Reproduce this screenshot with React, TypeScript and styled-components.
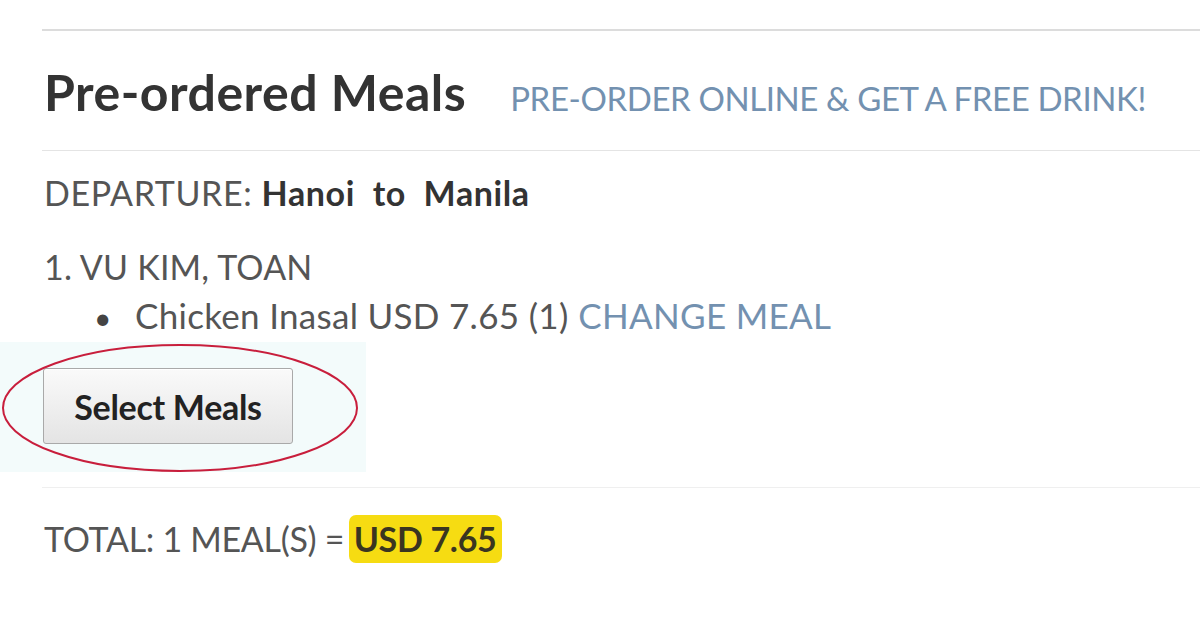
import React from 'react';
import styled, { createGlobalStyle } from 'styled-components';

const GlobalStyle = createGlobalStyle`
  html, body {
    margin: 0;
    padding: 0;
    background: #fff;
  }
  body {
    font-family: "Lato", "Liberation Sans", sans-serif;
    color: #555;
  }
`;

const Page = styled.div`
  width: 1200px;
  height: 630px;
  overflow: hidden;
  padding-top: 29px;
  box-sizing: border-box;
`;

const Section = styled.section`
  margin-left: 42px;
  border-top: 2px solid #dcdcdc;
`;

const HeadRow = styled.div`
  display: flex;
  align-items: baseline;
  gap: 44px;
  padding: 34px 0 30px 2px;
  border-bottom: 1px solid #e4e4e4;
`;

const Title = styled.h2`
  margin: 0;
  font-size: 50px;
  line-height: 55px;
  font-weight: 700;
  color: #333;
  letter-spacing: 0.5px;
`;

const Promo = styled.a`
  font-size: 33px;
  color: #7391b0;
  letter-spacing: -0.4px;
  text-decoration: none;
`;

const Body = styled.div`
  padding: 19px 0 0 2px;
`;

const Line = styled.p<{ $gap?: number }>`
  margin: 0 0 ${p => p.$gap ?? 0}px;
  font-size: 34px;
  line-height: 46px;
  color: #555;
  letter-spacing: 0.2px;
`;

const Departure = styled(Line)`
  letter-spacing: 0.6px;
`;

const Strong = styled.b`
  font-weight: 700;
  color: #333;
`;

const MealList = styled.ul`
  margin: 0;
  padding-left: 50px;
  list-style: none;
  font-size: 35px;
  line-height: 50px;
  letter-spacing: 0.3px;
`;

const MealItem = styled.li`
  display: flex;
  align-items: baseline;
  white-space: nowrap;
  &::before {
    content: "•";
    width: 41px;
    flex-shrink: 0;
    font-size: 30px;
    color: #444;
  }
`;

const Link = styled.a`
  color: #7391b0;
  text-decoration: none;
  margin-left: 0.28em;
`;

const ButtonArea = styled.div`
  position: relative;
  margin-left: -44px;
  width: 366px;
  height: 130px;
  background: #f3fbfb;
  display: flex;
  align-items: center;
  padding-left: 43px;
  box-sizing: border-box;
`;

const SelectButton = styled.button`
  width: 250px;
  height: 76px;
  margin-top: -2px;
  font-family: "Lato", "Liberation Sans", sans-serif;
  font-size: 34px;
  font-weight: 700;
  color: #222;
  letter-spacing: -0.3px;
  border: 1px solid #a9a9a9;
  border-radius: 3px;
  background: linear-gradient(#fafafa, #e4e4e4);
  box-shadow: inset 0 1px 0 #fff;
`;

const Ring = styled.svg`
  position: absolute;
  left: 0;
  top: 0;
  pointer-events: none;
`;

const Footer = styled.div`
  margin-top: 15px;
  border-top: 1px solid #efefef;
  padding: 27px 0 0 2px;
`;

const Total = styled.p`
  margin: 0;
  font-size: 34px;
  line-height: 48px;
  color: #555;
  letter-spacing: -0.3px;
`;

const Price = styled.span`
  display: inline-block;
  margin-left: -4px;
  background: #f6dc12;
  color: #3a3520;
  font-weight: 700;
  padding: 0 5px;
  border-radius: 7px;
  line-height: 48px;
`;

export default function App() {
  return (
    <>
      <GlobalStyle />
      <Page>
        <Section>
          <HeadRow>
            <Title>Pre-ordered Meals</Title>
            <Promo>PRE-ORDER ONLINE &amp; GET A FREE DRINK!</Promo>
          </HeadRow>
          <Body>
            <Departure $gap={28}>
              DEPARTURE: <Strong>Hanoi&nbsp; to&nbsp; Manila</Strong>
            </Departure>
            <Line>1. VU KIM, TOAN</Line>
            <MealList>
              <MealItem>
                Chicken Inasal USD 7.65 (1)<Link>CHANGE MEAL</Link>
              </MealItem>
            </MealList>
            <ButtonArea>
              <SelectButton>Select Meals</SelectButton>
              <Ring width="366" height="130" viewBox="0 0 366 130">
                <ellipse cx="180" cy="66" rx="177" ry="63" fill="none" stroke="#c81e3c" strokeWidth="2" />
              </Ring>
            </ButtonArea>
          </Body>
          <Footer>
            <Total>
              TOTAL: 1 MEAL(S) = <Price>USD 7.65</Price>
            </Total>
          </Footer>
        </Section>
      </Page>
    </>
  );
}
